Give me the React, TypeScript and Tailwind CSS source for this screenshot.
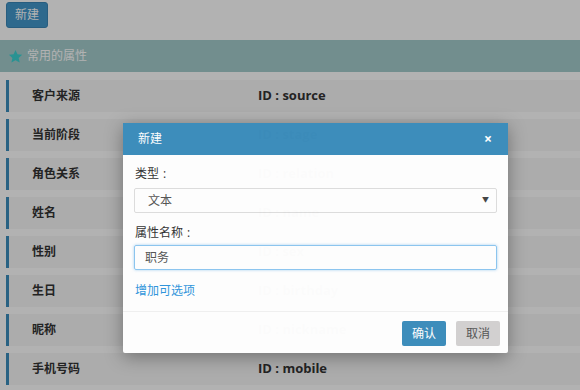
const rows = [
  { label: "客户来源", id: "source" },
  { label: "当前阶段", id: "stage" },
  { label: "角色关系", id: "relation" },
  { label: "姓名", id: "name" },
  { label: "性别", id: "sex" },
  { label: "生日", id: "birthday" },
  { label: "昵称", id: "nickname" },
  { label: "手机号码", id: "mobile" },
];

const font = "font-['Open_Sans','Noto_Sans_CJK_SC',sans-serif]";

export default function App() {
  return (
    <div className={`relative h-[390px] w-[580px] overflow-hidden bg-white ${font}`}>
      <div className="pl-[6px] pt-[1px]">
        <button className="h-[26px] w-[42px] rounded-[3px] border border-[#3a86b6] bg-[#4297cb] text-[12px] text-white">
          新建
        </button>
      </div>

      <div className="mt-[12px] flex h-[32px] items-center gap-[4px] bg-[#a4cccc] pl-[8px]">
        <svg width="15" height="15" viewBox="0 0 24 24">
          <path
            d="M12 1.5l3.2 6.9 7.5.8-5.6 5.1 1.6 7.4L12 17.9l-6.6 3.8 1.6-7.4-5.6-5.1 7.5-.8z"
            fill="#3cd2d2"
          />
        </svg>
        <span className="text-[12px] text-white">常用的属性</span>
      </div>

      <div className="mt-[8px] flex flex-col gap-[7px] pl-[6px]">
        {rows.map((r) => (
          <div
            key={r.id}
            className="flex h-[32px] items-center border-l-[3px] border-[#3c8dbc] bg-[#f6f6f6]"
          >
            <span className="w-[249px] pl-[23px] text-[12px] font-bold text-[#333]">
              {r.label}
            </span>
            <span className="text-[13px] font-bold text-[#333]">ID : {r.id}</span>
          </div>
        ))}
      </div>

      <div className="absolute inset-0 bg-black/30" />

      <div className="absolute left-[123px] top-[123px] w-[385px] rounded-[2px] bg-white opacity-[0.985] shadow-[0_4px_18px_rgba(0,0,0,0.35)]">
        <div className="flex h-[32px] items-center justify-between bg-[#3c8dbc] pl-[15px] pr-[16px]">
          <span className="text-[12px] text-white">新建</span>
          <span className="text-[14px] font-bold leading-none text-white">×</span>
        </div>
        <div className="px-[11px] pt-[10px]">
          <div className="pl-[1px] text-[12px] leading-[18px] text-[#333]">
            类型<span className="ml-[4px]">:</span>
          </div>
          <div className="mt-[5px] flex h-[25px] items-center justify-between rounded-[2px] border border-[#ddd] pl-[13px] pr-[7px]">
            <span className="text-[12px] text-[#555]">文本</span>
            <span className="text-[7px] text-[#444]">▼</span>
          </div>
          <div className="mt-[11px] pl-[1px] text-[12px] leading-[18px] text-[#333]">
            属性名称<span className="ml-[4px]">:</span>
          </div>
          <div className="mt-[3px] flex h-[25px] items-center rounded-[2px] border border-[#8cc6f0] pl-[10px] shadow-[0_0_3px_rgba(102,175,233,0.6)]">
            <span className="text-[12px] text-[#555]">职务</span>
          </div>
          <div className="mt-[12px] pl-[1px] text-[12px] leading-[18px] text-[#2f95dc]">增加可选项</div>
        </div>
        <div className="mt-[11px] flex justify-end gap-[10px] border-t border-[#f0f0f0] pb-[7px] pr-[8px] pt-[9px]">
          <button className="h-[25px] w-[44px] rounded-[2px] bg-[#3c8dbc] text-[12px] text-white">
            确认
          </button>
          <button className="h-[25px] w-[44px] rounded-[2px] bg-[#d3d1d1] text-[12px] text-[#555]">
            取消
          </button>
        </div>
      </div>
    </div>
  );
}
